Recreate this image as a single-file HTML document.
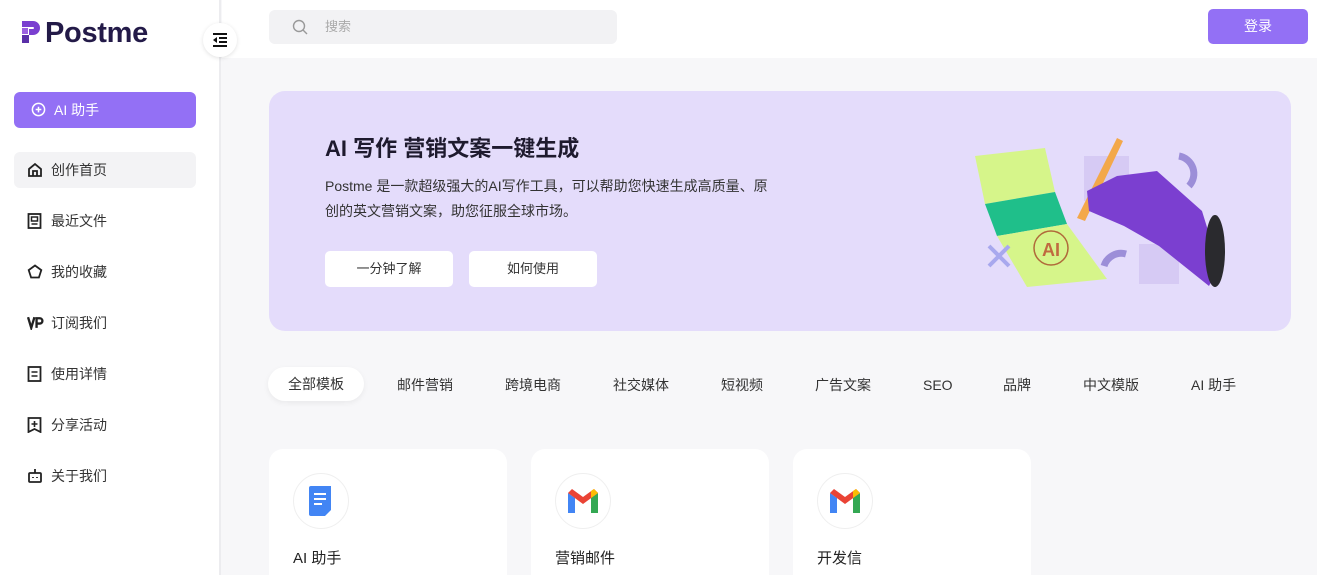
<!DOCTYPE html>
<html style="overflow:hidden;height:575px"><head><meta charset="utf-8"><style>
*{box-sizing:border-box;margin:0;padding:0}
body{width:1317px;height:575px;overflow:hidden;background:#f7f7f9;font-family:"Liberation Sans","Noto Sans CJK SC",sans-serif;color:#222;position:relative}
.side{position:absolute;left:0;top:0;width:221px;height:575px;background:#fff;border-right:2px solid #ececef}
.logo{position:absolute;left:22px;top:17px;font-size:29px;font-weight:bold;color:#231a48;letter-spacing:-0.3px}
.tog{position:absolute;left:203px;top:23px;width:34px;height:34px;border-radius:50%;background:#fff;box-shadow:0 1px 4px rgba(0,0,0,.12);z-index:3}
.aib{position:absolute;left:14px;top:92px;width:182px;height:36px;border-radius:6px;background:#9370f5;color:#fff;font-size:14px;line-height:36px;padding-left:40px}
.nav{position:absolute;left:14px;width:182px;height:36px;border-radius:6px;font-size:14px;line-height:36px;padding-left:37px;color:#333}
.nav svg{position:absolute;left:13px;top:10px}
.top{position:absolute;left:222px;top:0;right:0;height:58px;background:#fff}
.search{position:absolute;left:269px;top:10px;width:348px;height:34px;border-radius:6px;background:#f2f2f4;color:#aaa;font-size:13px;line-height:34px;padding-left:56px}
.login{position:absolute;left:1208px;top:9px;width:100px;height:35px;border-radius:5px;background:#9370f5;color:#fff;font-size:14px;text-align:center;line-height:35px}
.ban{position:absolute;left:269px;top:91px;width:1022px;height:240px;border-radius:16px;background:#e4dcfb}
.ban h1{position:absolute;left:56px;top:40px;font-size:22px;color:#1e1a2e}
.ban p{position:absolute;left:56px;top:83px;width:452px;font-size:14px;line-height:25px;color:#333}
.bb{position:absolute;top:160px;width:128px;height:36px;background:#fff;border-radius:5px;font-size:13px;text-align:center;line-height:36px;color:#333}
.tab{position:absolute;top:372px;height:34px;line-height:26px;font-size:14px;color:#333;padding-top:0}
.tab.on{background:#fff;border-radius:17px;box-shadow:0 2px 6px rgba(0,0,0,.06);padding:0 20px;line-height:34px;left:268px;top:367px}
.card{position:absolute;top:449px;width:238px;height:126px;background:#fff;border-radius:14px 14px 0 0}
.ic{position:absolute;left:24px;top:24px;width:56px;height:56px;border-radius:50%;border:1px solid #efefef;display:flex;align-items:center;justify-content:center}
.card span{position:absolute;left:24px;top:98px;font-size:15px;color:#222}
</style></head><body>
<div class="side">
<div class="logo"><svg width="20" height="24" viewBox="0 0 20 24" style="vertical-align:-2px;margin-right:3px"><path d="M0 1h11a7 7 0 0 1 0 14H7V9h4a1 1 0 0 0 0-2H0z" fill="#7a3fd0"/><rect x="0" y="15" width="7" height="8" fill="#5a2fa8"/><rect x="0" y="8" width="6" height="6" fill="#9b5fe0"/></svg>Postme</div>
<div class="aib"><svg width="15" height="15" viewBox="0 0 16 16" style="position:absolute;left:17px;top:10px"><circle cx="8" cy="8" r="6.5" fill="none" stroke="#fff" stroke-width="1.6"/><path d="M8 5v6M5 8h6" stroke="#fff" stroke-width="1.6"/></svg>AI 助手</div>
<div class="nav" style="top:152px;background:#f3f3f5"><svg width="16" height="16" viewBox="0 0 16 16"><path d="M2 7L8 2l6 5v7H2z M6 14V9h4v5" fill="none" stroke="#222" stroke-width="1.8"/></svg>创作首页</div>
<div class="nav" style="top:203px"><svg width="15" height="16" viewBox="0 0 14 16"><rect x="1" y="1" width="12" height="14" fill="none" stroke="#222" stroke-width="1.8"/><rect x="4" y="4" width="6" height="4" fill="none" stroke="#222" stroke-width="1.5"/><path d="M4 11h6" stroke="#222" stroke-width="1.5"/></svg>最近文件</div>
<div class="nav" style="top:254px"><svg width="16" height="16" viewBox="0 0 16 16"><path d="M8 1.5l6.3 4.6-2.4 7.4H4.1L1.7 6.1z" fill="none" stroke="#222" stroke-width="1.8"/></svg>我的收藏</div>
<div class="nav" style="top:305px"><svg width="17" height="15" viewBox="0 0 16 14"><path d="M1 2l3 10 3-10M9 12V3h3a2.5 2.5 0 0 1 0 5H9" fill="none" stroke="#222" stroke-width="2.2"/></svg>订阅我们</div>
<div class="nav" style="top:356px"><svg width="15" height="16" viewBox="0 0 14 16"><rect x="1" y="1" width="12" height="14" fill="none" stroke="#222" stroke-width="1.8"/><path d="M4 6h6M4 10h6" stroke="#222" stroke-width="1.6"/></svg>使用详情</div>
<div class="nav" style="top:407px"><svg width="15" height="16" viewBox="0 0 14 16"><path d="M1 1h12v14l-6-3-6 3z" fill="none" stroke="#222" stroke-width="1.8"/><path d="M7 4v6M4 7h6" stroke="#222" stroke-width="1.6"/></svg>分享活动</div>
<div class="nav" style="top:458px"><svg width="16" height="16" viewBox="0 0 16 16"><rect x="2" y="5" width="12" height="9" rx="1" fill="none" stroke="#222" stroke-width="1.8"/><path d="M8 1v4M6 9v1M10 9v1" stroke="#222" stroke-width="1.8"/></svg>关于我们</div>
</div>
<div class="tog"><svg width="16" height="14" viewBox="0 0 16 14" style="margin:10px 9px"><path d="M1 1h14M7 5h8M7 9h8M1 13h14" stroke="#111" stroke-width="2"/><path d="M1 7l4-3v6z" fill="#111"/></svg></div>
<div class="top"></div>
<div class="search"><svg width="16" height="16" viewBox="0 0 16 16" style="position:absolute;left:23px;top:9px"><circle cx="7" cy="7" r="5.5" fill="none" stroke="#999" stroke-width="1.4"/><path d="M11 11l4 4" stroke="#999" stroke-width="1.4"/></svg>搜索</div>
<div class="login">登录</div>
<div class="ban">
<h1>AI 写作 营销文案一键生成</h1>
<p>Postme 是一款超级强大的AI写作工具，可以帮助您快速生成高质量、原创的英文营销文案，助您征服全球市场。</p>
<div class="bb" style="left:56px">一分钟了解</div>
<div class="bb" style="left:200px">如何使用</div>
<svg width="260" height="160" viewBox="0 0 260 160" style="position:absolute;left:700px;top:45px">
<rect x="115" y="20" width="45" height="45" fill="#c8b8ee" opacity=".5"/>
<rect x="170" y="108" width="40" height="40" fill="#c8b8ee" opacity=".5"/>
<path d="M6 20l70-8 10 44-70 12z" fill="#d6f58a"/>
<path d="M16 68l70-12 12 32-70 12z" fill="#1fbf8a"/>
<path d="M28 100l70-12 40 55-80 8z" fill="#d6f58a"/>
<circle cx="82" cy="112" r="17" fill="none" stroke="#b06a3a" stroke-width="1.5"/>
<text x="73" y="120" font-size="18" font-weight="bold" fill="#c06a40" font-family="Liberation Sans">AI</text>
<path d="M108 82l40-80 6 3-38 80z" fill="#f3a84a"/>
<path d="M118 55l30-15 40-5 45 40 17 55-10 20-50-40-35-20-35-15z" fill="#7b3fd0"/>
<ellipse cx="246" cy="115" rx="10" ry="36" fill="#2a2a2e"/>
<path d="M20 110l20 20M40 110l-20 20" stroke="#a8a8ee" stroke-width="4"/>
<path d="M210 20a18 18 0 0 1 10 30" fill="none" stroke="#9c8ed8" stroke-width="7"/>
<path d="M135 130a18 18 0 0 1 22-12" fill="none" stroke="#9c8ed8" stroke-width="7"/>
</svg>
</div>
<div class="tab on">全部模板</div>
<div class="tab" style="left:397px">邮件营销</div>
<div class="tab" style="left:505px">跨境电商</div>
<div class="tab" style="left:613px">社交媒体</div>
<div class="tab" style="left:721px">短视频</div>
<div class="tab" style="left:815px">广告文案</div>
<div class="tab" style="left:923px">SEO</div>
<div class="tab" style="left:1003px">品牌</div>
<div class="tab" style="left:1083px">中文模版</div>
<div class="tab" style="left:1191px">AI 助手</div>
<div class="card" style="left:269px"><div class="ic"><svg width="24" height="30" viewBox="0 0 24 30"><path d="M0 2a2 2 0 0 1 2-2h20v24l-6 6H2a2 2 0 0 1-2-2z" fill="#4285f4"/><path d="M5 8h12M5 13h12M5 18h8" stroke="#fff" stroke-width="2"/></svg></div><span>AI 助手</span></div>
<div class="card" style="left:531px"><div class="ic"><svg width="30" height="24" viewBox="0 0 30 24"><path d="M0 4v20h7V9z" fill="#4285f4"/><path d="M23 9v15h7V4z" fill="#34a853"/><path d="M0 4l15 11 15-11-4-4-11 8L4 0z" fill="#ea4335"/><path d="M23 2l3-2 4 4v0l-7 5z" fill="#fbbc04"/></svg></div><span>营销邮件</span></div>
<div class="card" style="left:793px"><div class="ic"><svg width="30" height="24" viewBox="0 0 30 24"><path d="M0 4v20h7V9z" fill="#4285f4"/><path d="M23 9v15h7V4z" fill="#34a853"/><path d="M0 4l15 11 15-11-4-4-11 8L4 0z" fill="#ea4335"/><path d="M23 2l3-2 4 4v0l-7 5z" fill="#fbbc04"/></svg></div><span>开发信</span></div>
</body></html>
